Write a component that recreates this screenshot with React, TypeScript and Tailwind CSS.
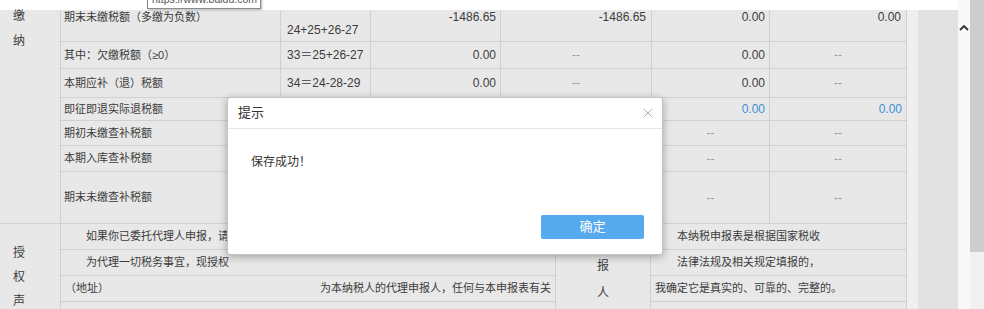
import { X } from 'lucide-react';

const cell = 'bg-[#e8e8e8] flex items-center';
const num = 'justify-end text-[12px]';
const dash = 'justify-center text-[#9a9a9a] text-[12px]';

type Row = {
  label: string;
  formula: string;
  c4: string;
  c5: string;
  c6: string;
  c7: string;
  blue?: boolean;
};

const rows: Row[] = [
  { label: '其中：欠缴税额（≥0）', formula: '33＝25+26-27', c4: '0.00', c5: '--', c6: '0.00', c7: '--' },
  { label: '本期应补（退）税额', formula: '34＝24-28-29', c4: '0.00', c5: '--', c6: '0.00', c7: '--' },
  { label: '即征即退实际退税额', formula: '', c4: '0.00', c5: '0.00', c6: '0.00', c7: '0.00', blue: true },
  { label: '期初未缴查补税额', formula: '', c4: '0.00', c5: '--', c6: '--', c7: '--' },
  { label: '本期入库查补税额', formula: '', c4: '0.00', c5: '--', c6: '--', c7: '--' },
  { label: '期末未缴查补税额', formula: '', c4: '0.00', c5: '--', c6: '--', c7: '--' },
];

function Val({ v, blue }: { v: string; blue?: boolean }) {
  const isDash = v === '--';
  return (
    <div
      className={`${cell} ${isDash ? dash : num} ${blue ? 'bg-[#dde4ea] text-[#3d8fd6]' : ''}`}
    >
      <span className={isDash ? '' : 'pr-[4px]'}>{v}</span>
    </div>
  );
}

export default function App() {
  return (
    <div className="relative w-[984px] h-[309px] overflow-hidden bg-white flex text-[#3c3c3c] font-['Liberation_Sans','Noto_Sans_CJK_SC',sans-serif]">
      {/* page */}
      <div className="w-[958px] flex flex-col shrink-0">
        <div className="h-[10px] bg-white shrink-0" />
        <div className="flex flex-1">
          <div className="w-[907px] bg-[#d0d0d0] pr-px flex flex-col gap-px">
            {/* section 1 */}
            <div className="grid grid-cols-[60px_219px_89px_129px_150px_117px_136px] grid-rows-[31px_26px_28px_22px_24px_25px_51px] gap-px text-[11px]">
              <div className="row-span-7 bg-[#e8e8e8] pl-[13px]">
                <div className="-mt-[6px] leading-[25px] text-[12px]">
                  <div>缴</div>
                  <div>纳</div>
                </div>
              </div>
              {/* row A */}
              <div className="bg-[#e8e8e8] pl-[3px] leading-[14px]">期末未缴税额（多缴为负数）</div>
              <div className="bg-[#e8e8e8] pl-[6px] pt-[13px] leading-[14px] text-[12px]">24+25+26-27</div>
              <div className="bg-[#e8e8e8] text-right pr-[4px] leading-[14px] text-[12px]">-1486.65</div>
              <div className="bg-[#e8e8e8] text-right pr-[5px] leading-[14px] text-[12px]">-1486.65</div>
              <div className="bg-[#e8e8e8] text-right pr-[4px] leading-[14px] text-[12px]">0.00</div>
              <div className="bg-[#e8e8e8] text-right pr-[5px] leading-[14px] text-[12px]">0.00</div>
              {rows.map((r) => (
                <div key={r.label} className="contents">
                  <div className={`${cell} pl-[3px]`}>{r.label}</div>
                  <div className={`${cell} pl-[6px] text-[12px]`}>{r.formula}</div>
                  <Val v={r.c4} blue={r.blue} />
                  <Val v={r.c5} blue={r.blue} />
                  <Val v={r.c6} blue={r.blue} />
                  <Val v={r.c7} blue={r.blue} />
                </div>
              ))}
            </div>

            {/* section 2 */}
            <div className="grid grid-cols-[60px_494px_94px_255px] grid-rows-[25px_25px_25px_26px] gap-px text-[11px]">
              <div className="row-span-4 bg-[#e8e8e8] pl-[13px] pt-[17px] leading-[24px] text-[12px]">
                <div>授</div>
                <div>权</div>
                <div>声</div>
              </div>
              <div className={`${cell} pl-[25px]`}>如果你已委托代理人申报，请填写下列资料：</div>
              <div className="row-span-4 col-start-3 row-start-1 bg-[#e8e8e8] flex flex-col items-center pt-[29px] leading-[27px] text-[12px]">
                <div>报</div>
                <div>人</div>
              </div>
              <div className={`${cell} pl-[26px]`}>本纳税申报表是根据国家税收</div>
              <div className={`${cell} pl-[25px]`}>为代理一切税务事宜，现授权</div>
              <div className={`${cell} pl-[26px]`}>法律法规及相关规定填报的，</div>
              <div className={`${cell} justify-between pl-[4px] pr-[4px]`}>
                <span>（地址）</span>
                <span>为本纳税人的代理申报人，任何与本申报表有关</span>
              </div>
              <div className={`${cell} pl-[4px]`}>我确定它是真实的、可靠的、完整的。</div>
              <div className={cell} />
              <div className={cell} />
            </div>
          </div>
          <div className="w-[11px] bg-[#efefef]" />
          <div className="w-[40px] bg-[#e2e2e2]" />
        </div>
      </div>

      {/* side strip + scrollbar */}
      <div className="w-[12px] bg-[#f8f8f8] pt-[25px] flex justify-center shrink-0">
        <svg width="10" height="6" viewBox="0 0 10 6" className="h-[6px]">
          <path d="M1 5 L5 1 L9 5" fill="none" stroke="#333" strokeWidth="1.8" />
        </svg>
      </div>
      <div className="w-[14px] flex flex-col shrink-0">
        <div className="h-[252px] bg-[#cdcdcd]" />
        <div className="flex-1 bg-[#f1f1f1]" />
      </div>

      {/* link tooltip */}
      <div className="absolute left-[147px] -top-[11px] h-[20px] w-[114px] bg-white border border-[#8a8a8a] shadow-[1px_1px_2px_rgba(0,0,0,0.3)] pl-[4px] text-[10.5px] leading-[18px] text-[#555]">
        https://www.baidu.com
      </div>

      {/* dialog */}
      <div className="absolute left-[227px] top-[97px] w-[436px] h-[158px] bg-white border border-[#c4c4c4] rounded-[3px] shadow-[0_2px_8px_rgba(0,0,0,0.3)] flex flex-col">
        <div className="h-[31px] border-b border-[#e6e6e6] flex items-center justify-between pl-[10px] pr-[6px] shrink-0">
          <span className="text-[13px] text-[#333]">提示</span>
          <X size={16} strokeWidth={1.2} className="text-[#9a9a9a]" />
        </div>
        <div className="pl-[23px] pt-[23px] leading-[20px] text-[12px] text-[#333]">保存成功！</div>
        <div className="flex justify-end mt-[43px] pr-[18px]">
          <button className="w-[103px] h-[24px] bg-[#55a9ec] text-white text-[13px] rounded-[2px]">
            确定
          </button>
        </div>
      </div>
    </div>
  );
}
